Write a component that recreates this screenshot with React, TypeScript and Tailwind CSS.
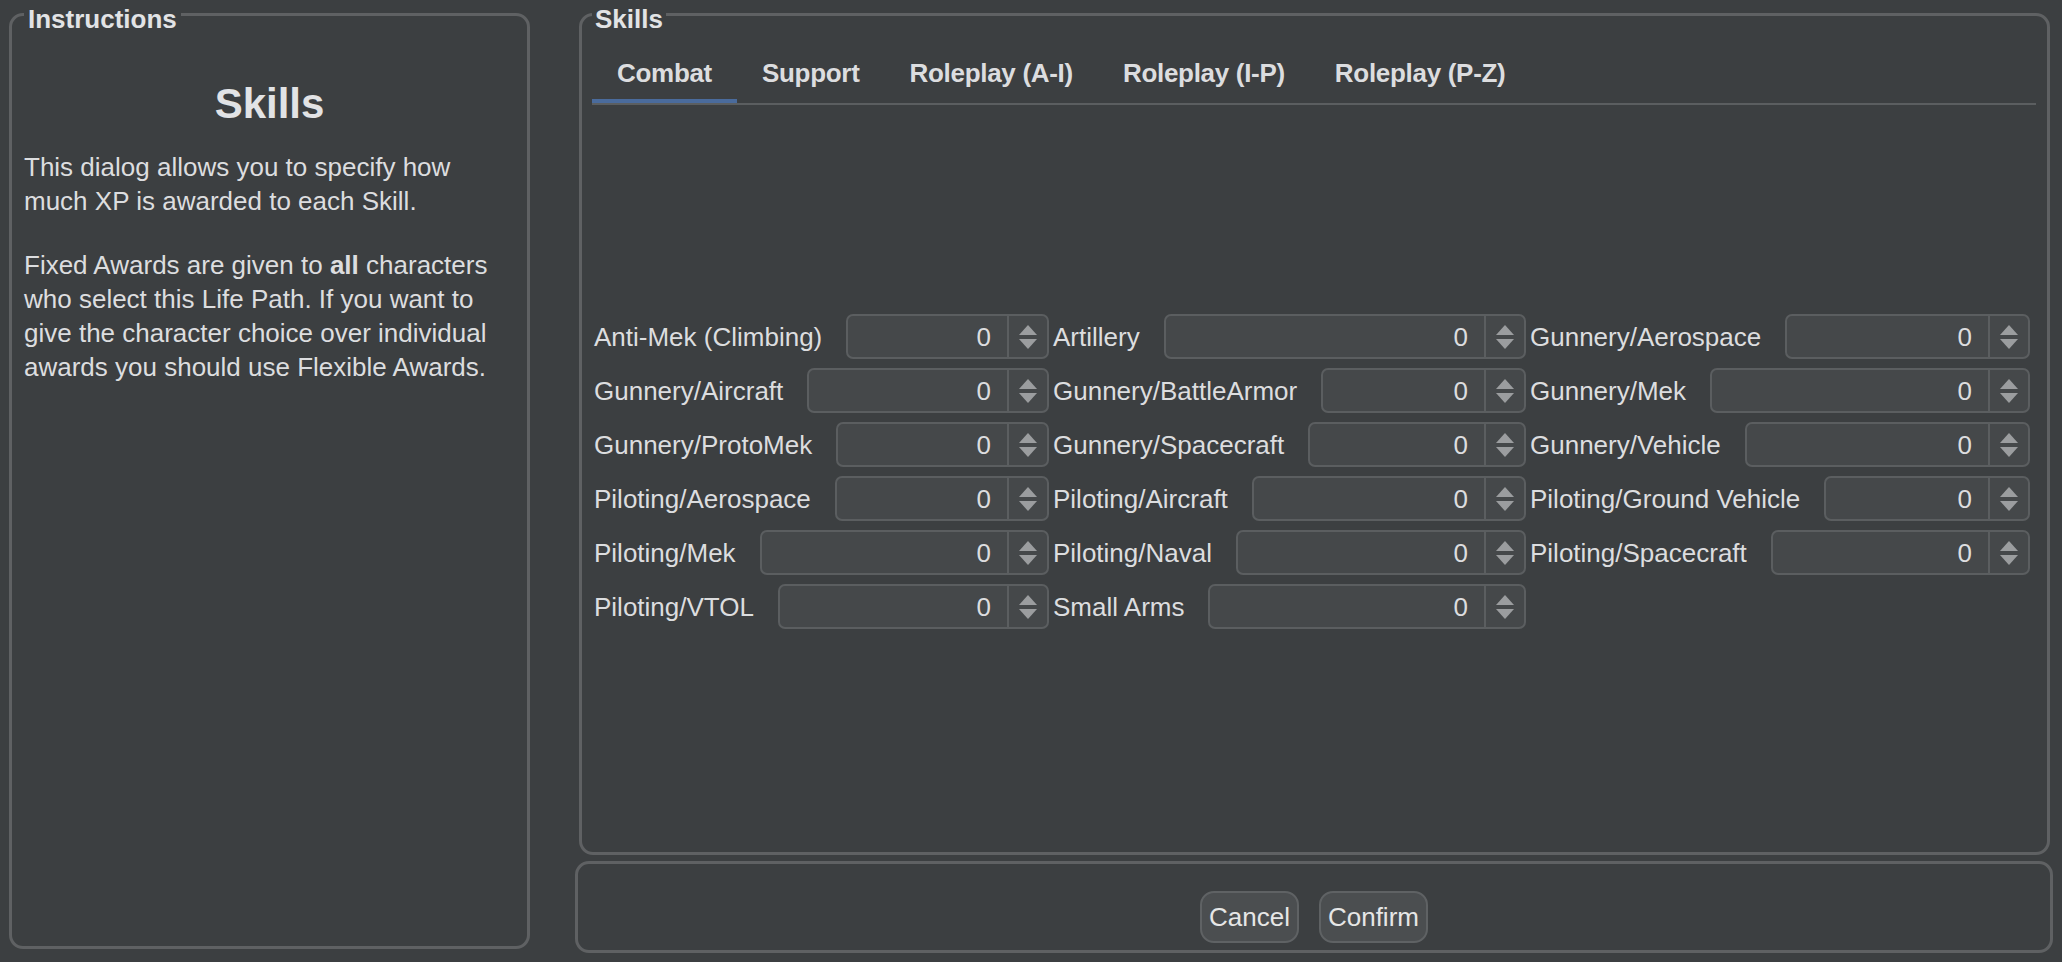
import { useState } from 'react'

const tabs = ['Combat', 'Support', 'Roleplay (A-I)', 'Roleplay (I-P)', 'Roleplay (P-Z)']

const combatSkills = [
  'Anti-Mek (Climbing)',
  'Artillery',
  'Gunnery/Aerospace',
  'Gunnery/Aircraft',
  'Gunnery/BattleArmor',
  'Gunnery/Mek',
  'Gunnery/ProtoMek',
  'Gunnery/Spacecraft',
  'Gunnery/Vehicle',
  'Piloting/Aerospace',
  'Piloting/Aircraft',
  'Piloting/Ground Vehicle',
  'Piloting/Mek',
  'Piloting/Naval',
  'Piloting/Spacecraft',
  'Piloting/VTOL',
  'Small Arms',
]

function Spinner({ value }: { value: number }) {
  return (
    <div className="flex h-[45px] min-w-0 flex-1 rounded-[7px] border-2 border-[#5b5e60] bg-[#45484a]">
      <div className="flex flex-1 items-center justify-end pr-[16px] text-[26px] leading-none text-[#dcdddf]">{value}</div>
      <div className="w-[2px] bg-[#5b5e60]" />
      <div className="flex w-[38px] items-center justify-center">
        <svg width="18" height="24" viewBox="0 0 18 24" fill="#9b9d9f">
          <polygon points="9,0 18,10 0,10" />
          <polygon points="0,14 18,14 9,24" />
        </svg>
      </div>
    </div>
  )
}

export default function App() {
  const [activeTab, setActiveTab] = useState('Combat')

  return (
    <div className="flex h-[962px] w-full bg-[#3c3f41] pl-[9px] pr-[9px] font-['Liberation_Sans',Arial,sans-serif] text-[#dcdddf]">
      <fieldset className="h-[949px] w-[521px] shrink-0 rounded-[14px] border-[3px] border-[#5f6163] px-[12px]">
        <legend className="px-[4px] pt-[9px] text-[26px] leading-[20px] font-bold text-[#e2e3e5]">Instructions</legend>
        <h1 className="mt-[50px] text-center text-[42px] leading-[50px] font-bold text-[#e2e3e5]">Skills</h1>
        <p className="mt-[21px] text-[26px] leading-[34px]">
          This dialog allows you to specify how
          <br />
          much XP is awarded to each Skill.
        </p>
        <p className="mt-[30px] text-[26px] leading-[34px]">
          Fixed Awards are given to <b>all</b> characters
          <br />
          who select this Life Path. If you want to
          <br />
          give the character choice over individual
          <br />
          awards you should use Flexible Awards.
        </p>
      </fieldset>

      <div className="ml-[45px] flex flex-1 flex-col">
        <fieldset className="mx-[4px] mr-[3px] h-[855px] rounded-[14px] border-[3px] border-[#5f6163] pl-[10px] pr-[11px]">
          <legend className="px-[3px] pt-[9px] text-[26px] leading-[20px] font-bold text-[#e2e3e5]">Skills</legend>
          <div className="mt-[18px] flex border-b-2 border-[#5b5e60]">
            {tabs.map((tab) => (
              <button
                key={tab}
                onClick={() => setActiveTab(tab)}
                className={
                  'flex h-[56px] items-center px-[25px] pb-[3px] text-[26px] font-bold tracking-[-0.3px] text-[#dcdddf] ' +
                  (activeTab === tab ? 'shadow-[inset_0_-4px_0_#4a6b9c]' : '')
                }
              >
                {tab}
              </button>
            ))}
          </div>
          {activeTab === 'Combat' && (
            <div className="mt-[209px] ml-[2px] grid grid-cols-[455px_473px_500px] gap-x-[4px] gap-y-[9px]">
              {combatSkills.map((skill) => (
                <div key={skill} className="flex items-center">
                  <span className="whitespace-nowrap pr-[24px] text-[26px] leading-[30px]">{skill}</span>
                  <Spinner value={0} />
                </div>
              ))}
            </div>
          )}
        </fieldset>

        <div className="mt-[6px] flex h-[92px] justify-center gap-[20px] rounded-[14px] border-[3px] border-[#5f6163] pt-[27px]">
          <button className="h-[52px] rounded-[14px] border-2 border-[#5f6264] bg-[#4b4e50] px-[7px] text-[26px] text-[#e6e6e6]">
            Cancel
          </button>
          <button className="h-[52px] rounded-[14px] border-2 border-[#5f6264] bg-[#4b4e50] px-[7px] text-[26px] text-[#e6e6e6]">
            Confirm
          </button>
        </div>
      </div>
    </div>
  )
}
